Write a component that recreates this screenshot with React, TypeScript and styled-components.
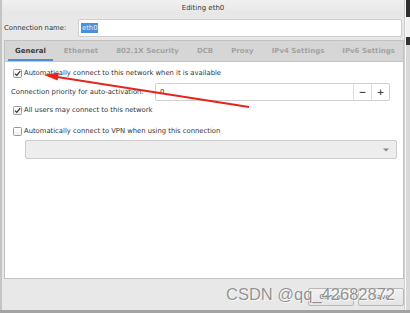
import React from "react";
import styled, { createGlobalStyle } from "styled-components";

const Global = createGlobalStyle`
  html, body { margin: 0; padding: 0; }
  body { width: 410px; height: 313px; overflow: hidden; background: #9c9c9c; }
  * { box-sizing: border-box; }
`;

const Screen = styled.div`
  position: relative;
  width: 410px;
  height: 313px;
  display: flex;
  flex-direction: column;
  font-family: "DejaVu Sans", sans-serif;
  color: #2e3436;
`;

const Main = styled.div`
  display: flex;
  height: 310px;
`;

const BottomEdge = styled.div`
  height: 3px;
  background: #a3a3a3;
`;

const Window = styled.div`
  width: 405px;
  display: flex;
  flex-direction: column;
  background: #e8e8e8;
  border-left: 2px solid #c4c4c4;
  border-right: 1px solid #d0d0d0;
`;

const SideStrip = styled.div`
  width: 5px;
  background: linear-gradient(
    to bottom,
    #2f2f2f 0px,
    #2f2f2f 17px,
    #f2f2f2 17px,
    #f2f2f2 37px,
    #333 37px,
    #333 45px,
    #d8d8d8 45px,
    #d8d8d8 100%
  );
  border-left: 1px solid #f8f8f8;
`;

const TitleBar = styled.div`
  height: 15px;
  display: flex;
  align-items: center;
  justify-content: center;
  font-size: 7px;
  color: #3a3a3a;
  background: linear-gradient(#f0f0f0, #e6e6e6);
  padding-top: 1px;
`;

const Header = styled.div`
  height: 25px;
  display: flex;
  align-items: flex-start;
  padding: 4px 2px 0 2px;
  gap: 6px;
`;

const Label = styled.span`
  font-size: 6.8px;
  white-space: nowrap;
`;

const HeaderLabel = styled(Label)`
  line-height: 18px;
  width: 68px;
`;

const TextField = styled.div`
  flex: 1;
  height: 18px;
  background: #fff;
  border: 1px solid #cfcfcf;
  border-radius: 2px;
  display: flex;
  align-items: center;
  padding-left: 2px;
  font-size: 6.8px;
`;

const Selection = styled.span`
  background: #4a90d9;
  color: #e9f1fb;
  padding: 1px 1px;
  line-height: 8px;
`;

const Notebook = styled.div`
  margin: 0 0 0 2px;
  height: 239px;
  display: flex;
  flex-direction: column;
  border: 1px solid #c2c2c2;
  background: #fff;
`;

const TabBar = styled.div`
  height: 21px;
  display: flex;
  align-items: stretch;
  background: #d6d6d6;
  border-bottom: 1px solid #c4c4c4;
  padding-left: 1px;
`;

const Tab = styled.div<{ $active?: boolean }>`
  position: relative;
  display: flex;
  align-items: center;
  padding: 0 9px;
  font-size: 7px;
  font-weight: bold;
  white-space: nowrap;
  flex: none;
  color: ${(p) => (p.$active ? "#3b3b3b" : "#a3a3a3")};
  &::after {
    content: "";
    display: ${(p) => (p.$active ? "block" : "none")};
    position: absolute;
    left: 2px;
    right: 2px;
    bottom: 0;
    height: 2px;
    background: #4a90d9;
  }
`;

const Page = styled.div`
  display: flex;
  flex-direction: column;
  padding: 2px 6px 0 6px;
`;

const CheckRow = styled.div<{ $mt?: number }>`
  height: 18px;
  margin-top: ${(p) => p.$mt ?? 0}px;
  padding-left: 2px;
  display: flex;
  align-items: center;
  gap: 2px;
`;

const Box = styled.div`
  width: 9px;
  height: 9px;
  border: 1px solid #9a9a9a;
  border-radius: 1.5px;
  background: linear-gradient(#ffffff, #efefef);
  display: flex;
  align-items: center;
  justify-content: center;
`;

const PriorityRow = styled.div`
  height: 18px;
  margin-top: 1px;
  display: flex;
  align-items: center;
`;

const PriorityLabel = styled(Label)`
  width: 144px;
`;

const Spin = styled.div`
  width: 235px;
  height: 18px;
  display: flex;
  border: 1px solid #cfcfcf;
  border-radius: 2px;
  background: #fff;
`;

const SpinValue = styled.div`
  flex: 1;
  display: flex;
  align-items: center;
  padding-left: 4px;
  font-size: 6.8px;
`;

const SpinButton = styled.div`
  width: 18px;
  display: flex;
  align-items: center;
  justify-content: center;
  border-left: 1px solid #dedede;
  font-size: 9px;
  font-weight: bold;
  color: #444;
`;

const Combo = styled.div`
  margin-left: 14px;
  width: 372px;
  height: 19px;
  background: #ededed;
  border: 1px solid #cdcdcd;
  border-radius: 2px;
  display: flex;
  align-items: center;
  justify-content: flex-end;
  padding-right: 7px;
`;

const ButtonBar = styled.div`
  flex: 1;
  display: flex;
  justify-content: flex-end;
  align-items: flex-start;
  padding-top: 9px;
  gap: 4px;
`;

const Button = styled.div`
  width: 46px;
  height: 18px;
  border: 1px solid #b8b8b8;
  border-radius: 2px;
  background: linear-gradient(#f2f2f2, #e4e4e4);
  display: flex;
  align-items: center;
  justify-content: center;
  font-size: 6.8px;
  color: #666;
`;

const Watermark = styled.div`
  position: absolute;
  left: 226px;
  top: 285px;
  font-family: "Liberation Sans", Arial, sans-serif;
  font-size: 16.5px;
  color: rgba(125, 125, 125, 0.85);
  text-shadow: 0 0 1px #fff, 1px 1px 0 rgba(255, 255, 255, 0.7);
  white-space: nowrap;
  pointer-events: none;
`;

const Overlay = styled.svg`
  position: absolute;
  left: 0;
  top: 0;
  pointer-events: none;
`;

const Check = () => (
  <svg width="7" height="7" viewBox="0 0 7 7">
    <path d="M1 3.6 L2.8 5.4 L6.2 1.2" fill="none" stroke="#333" strokeWidth="1.3" />
  </svg>
);

export default function App() {
  const tabs = ["General", "Ethernet", "802.1X Security", "DCB", "Proxy", "IPv4 Settings", "IPv6 Settings"];
  return (
    <Screen>
      <Global />
      <Main>
        <Window>
          <TitleBar>Editing eth0</TitleBar>
          <Header>
            <HeaderLabel>Connection name:</HeaderLabel>
            <TextField>
              <Selection>eth0</Selection>
            </TextField>
          </Header>
          <Notebook>
            <TabBar>
              {tabs.map((t, i) => (
                <Tab key={t} $active={i === 0}>
                  {t}
                </Tab>
              ))}
            </TabBar>
            <Page>
              <CheckRow>
                <Box>
                  <Check />
                </Box>
                <Label>Automatically connect to this network when it is available</Label>
              </CheckRow>
              <PriorityRow>
                <PriorityLabel>Connection priority for auto-activation:</PriorityLabel>
                <Spin>
                  <SpinValue>0</SpinValue>
                  <SpinButton>−</SpinButton>
                  <SpinButton>+</SpinButton>
                </Spin>
              </PriorityRow>
              <CheckRow>
                <Box>
                  <Check />
                </Box>
                <Label>All users may connect to this network</Label>
              </CheckRow>
              <CheckRow $mt={3}>
                <Box />
                <Label>Automatically connect to VPN when using this connection</Label>
              </CheckRow>
              <Combo>
                <svg width="6" height="4" viewBox="0 0 6 4">
                  <path d="M0 0.5 L6 0.5 L3 3.5 Z" fill="#888" />
                </svg>
              </Combo>
            </Page>
          </Notebook>
          <ButtonBar>
            <Button>Cancel</Button>
            <Button>Save</Button>
          </ButtonBar>
        </Window>
        <SideStrip />
      </Main>
      <BottomEdge />
      <Watermark>CSDN @qq_42682872</Watermark>
      <Overlay width="410" height="313" viewBox="0 0 410 313">
        <line x1="249" y1="107" x2="54" y2="76.5" stroke="#e8231d" strokeWidth="2" />
        <polygon points="44,75 59,72.5 57.5,80.5" fill="#e8231d" />
      </Overlay>
    </Screen>
  );
}
